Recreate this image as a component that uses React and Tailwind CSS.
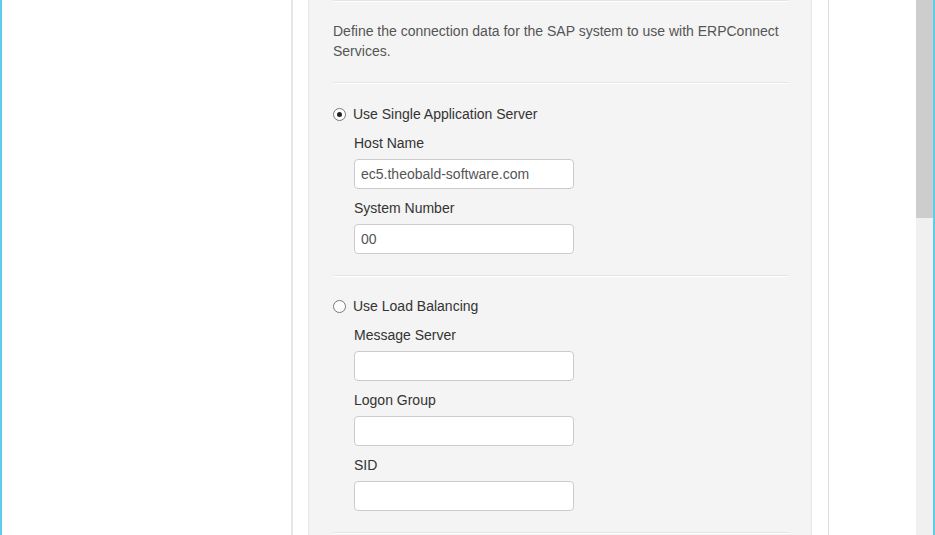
import React from 'react';

const font = { fontFamily: '"Liberation Sans", Arial, sans-serif' };

const Separator = () => (
  <div className="flex flex-col">
    <div className="h-px bg-[#e4e4e4]" />
    <div className="h-px bg-white" />
  </div>
);

const Radio = ({ checked }) => (
  <span className="w-[13px] h-[13px] rounded-full border border-[#777] bg-white flex items-center justify-center shrink-0">
    {checked && <span className="w-[5px] h-[5px] rounded-full bg-[#222]" />}
  </span>
);

const Field = ({ label, value }) => (
  <div className="mt-[9px] flex flex-col">
    <div className="h-5 leading-5 text-[14px] text-[#333]">{label}</div>
    <input
      readOnly
      value={value}
      className="mt-[6px] w-[220px] h-[30px] rounded-[4px] border border-[#cccccc] bg-white px-[6px] text-[14px] text-[#555] outline-none"
      style={font}
    />
  </div>
);

const Option = ({ checked, label, fields }) => (
  <div className="flex flex-col">
    <div className="h-5 flex items-center gap-[7px] text-[14px] text-[#333]">
      <Radio checked={checked} />
      <span className="leading-5">{label}</span>
    </div>
    <div className="ml-[21px] flex flex-col">
      {fields.map((f) => (
        <Field key={f.label} label={f.label} value={f.value} />
      ))}
    </div>
  </div>
);

export default function App() {
  return (
    <div
      className="w-[935px] h-[535px] overflow-hidden flex bg-white border-l-2 border-r-2 border-[#5ccdec]"
      style={font}
    >
      {/* left navigation area */}
      <div className="w-[289px] shrink-0 bg-white" />
      <div className="w-[2px] shrink-0 bg-[#e6e6e6]" />
      <div className="w-[15px] shrink-0" />

      {/* settings panel */}
      <div className="w-[504px] shrink-0 bg-[#f4f4f4] border-x border-[#e6e6e6] px-[24px] pr-[23px]">
        <Separator />
        <div className="pt-[19px] pb-[21px] text-[14px] leading-5 text-[#555]">
          Define the connection data for the SAP system to use with ERPConnect Services.
        </div>
        <Separator />
        <div className="pt-5 pb-[21px]">
          <Option
            checked
            label="Use Single Application Server"
            fields={[
              { label: 'Host Name', value: 'ec5.theobald-software.com' },
              { label: 'System Number', value: '00' },
            ]}
          />
        </div>
        <Separator />
        <div className="pt-[19px] pb-[21px]">
          <Option
            label="Use Load Balancing"
            fields={[
              { label: 'Message Server', value: '' },
              { label: 'Logon Group', value: '' },
              { label: 'SID', value: '' },
            ]}
          />
        </div>
        <Separator />
      </div>

      <div className="w-4 shrink-0" />
      <div className="w-px shrink-0 bg-[#dcdce6]" />
      <div className="flex-1 bg-white" />

      {/* scrollbar */}
      <div className="w-[17px] shrink-0 flex flex-col bg-[#f0f0f0]">
        <div className="h-[218px] bg-[#cdcdcd]" />
      </div>
    </div>
  );
}
